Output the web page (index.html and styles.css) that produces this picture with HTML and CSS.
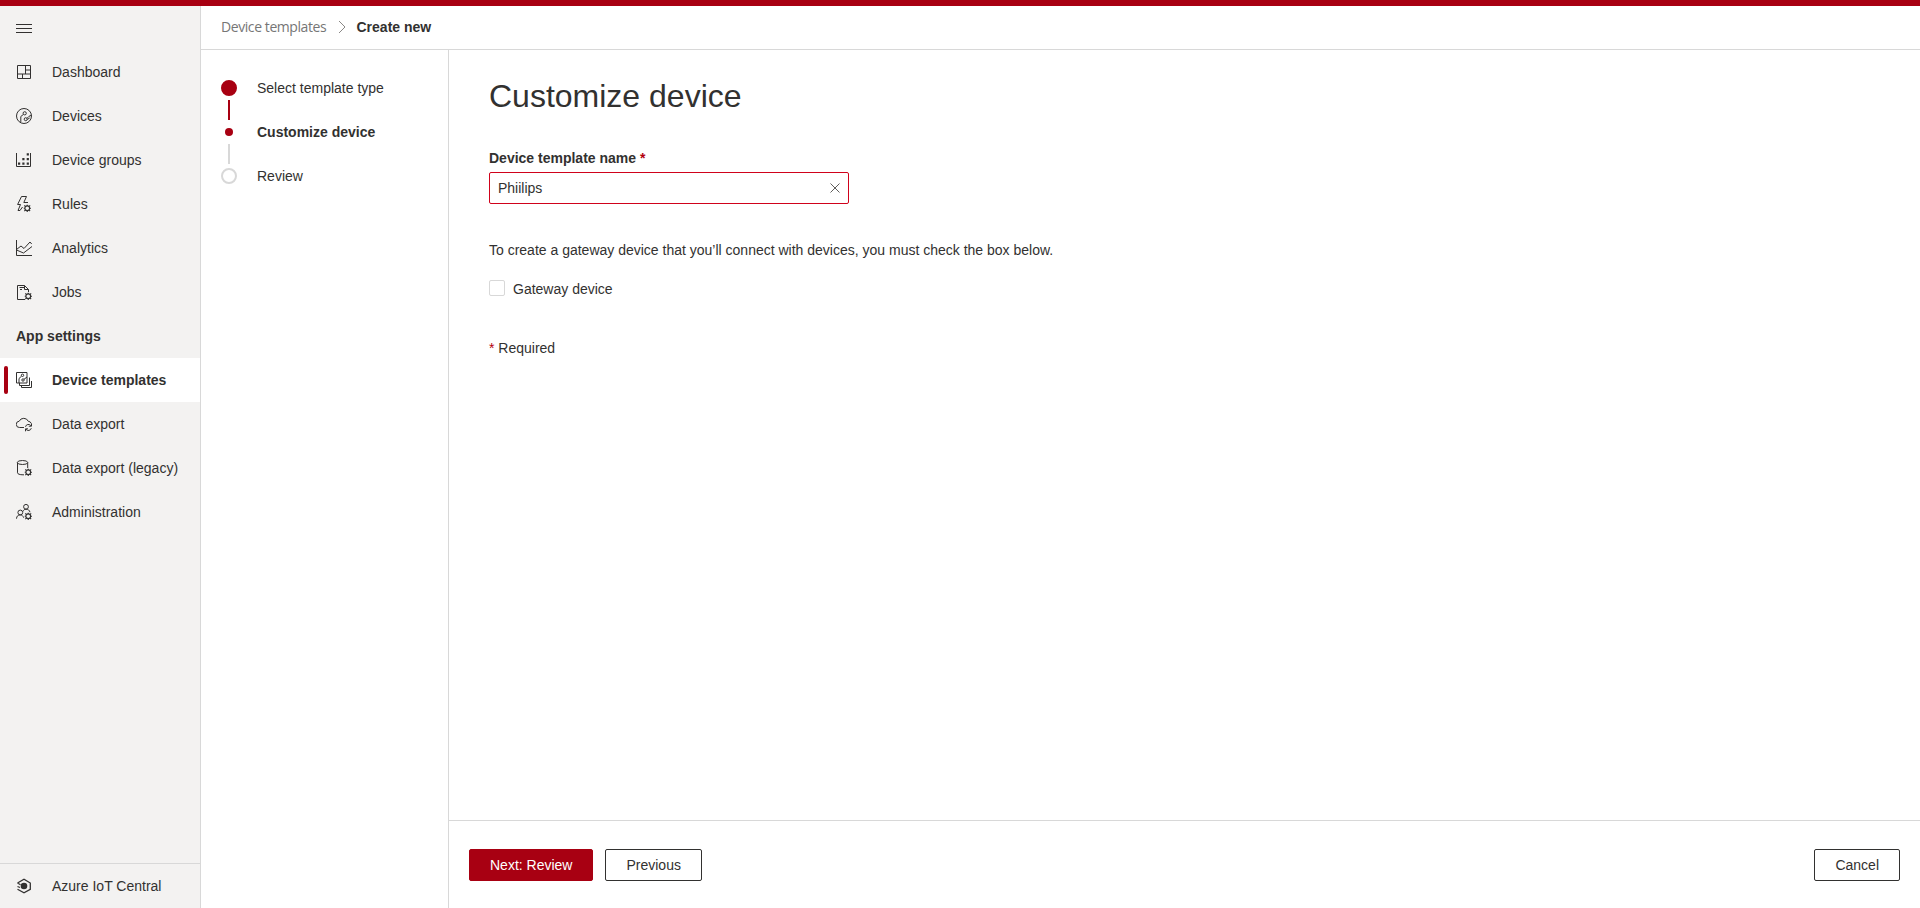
FILE: index.html
```html
<!DOCTYPE html>
<html lang="en">
<head>
<meta charset="utf-8">
<title>Customize device - Azure IoT Central</title>
<link rel="stylesheet" href="styles.css">
</head>
<body>
<svg class="defs" width="0" height="0" aria-hidden="true">
  <symbol id="gear" viewBox="0 0 7 7">
    <circle cx="3.5" cy="3.5" r="2.200" fill="none" stroke="currentColor" stroke-width="1"/>
    <path fill="none" stroke="currentColor" stroke-width="1" d="M3.500 0v1.300M3.500 5.700V7M0 3.500h1.300M5.700 3.500H7M.8.800l1.100 1.100M5.100 5.100l1.100 1.100M.8 6.200l1.100-1.100M5.100 1.900 6.200.8"/>
  </symbol>
</svg>
<div class="topbar"></div>
<div class="shell">
  <nav class="sidebar">
    <button class="nav-item menu" aria-label="Menu">
      <svg class="icon" viewBox="0 0 16 16"><path d="M0 4.500h16M0 8.500h16M0 12.500h16"/></svg>
    </button>
    <a class="nav-item"><svg class="icon" viewBox="0 0 16 16"><path d="M1.500 1.500h13v13h-13zM9.500 1.500v8.500M1.500 10h13M9.500 6h5M6.500 10v4.500"/></svg>Dashboard</a>
    <a class="nav-item"><svg class="icon" viewBox="0 0 16 16"><circle cx="8" cy="8" r="7.500"/><circle cx="8.700" cy="5.300" r="1.600"/><circle cx="9.700" cy="11.200" r="1.500"/><path d="M7.300 6.500 4.800 8.500V14M11 10.300l2-2 2.300-1M11.200 11.500l2.500-1.500"/></svg>Devices</a>
    <a class="nav-item"><svg class="icon" viewBox="0 0 16 16"><path d="M.5 1v13.500h14V1"/><path class="solid" d="M2 10.500h2.200v2.200H2zM6.300 10.500h2.200v2.200H6.300zM10.700 10.500h2.200v2.200h-2.200zM6.300 6h2.200v2.200H6.300zM10.700 6h2.200v2.200h-2.200zM10.700 1.200h2.200v2.200h-2.200z"/></svg>Device groups</a>
    <a class="nav-item"><svg class="icon" viewBox="0 0 16 16"><path d="M10.500.5h-5L1.600 8.500h2.900L2 14.500h2l2.500-3.500M10.500.5 7.800 6.500H12"/><use href="#gear" x="7.500" y="8.500" width="7.500" height="7.500"/></svg>Rules</a>
    <a class="nav-item"><svg class="icon" viewBox="0 0 16 16"><path d="M.5 0v15.500H16M.5 9.500 5 6l3 2.500L14 2l1.700 2M.5 10l7 3L16 6.500"/></svg>Analytics</a>
    <a class="nav-item"><svg class="icon" viewBox="0 0 16 16"><path d="M9 15.500H1.500v-14h7l4 4V8M8.500 1.500v4h4M3.500 3.500h5M4 5.500h2"/><use href="#gear" x="8.500" y="8.500" width="7.500" height="7.500"/></svg>Jobs</a>
    <div class="nav-heading">App settings</div>
    <a class="nav-item selected"><svg class="icon" viewBox="0 0 16 16"><path d="M.5.5h10.500v10.500H.5z"/><circle cx="6.500" cy="3.300" r="1.200"/><circle cx="7" cy="8" r="1.200"/><path d="M5.500 4.200 3 6.500V11M8 7.300l3-2.300M3.500 11v2.500h10v-8M5.500 14v1.500h10V9"/></svg>Device templates</a>
    <a class="nav-item"><svg class="icon" viewBox="0 0 16 16"><path d="M8 11.500H3.700A3.100 3.100 0 0 1 3.200 5.200 5 5 0 0 1 12.300 5.300 3.400 3.400 0 0 1 15.300 7.500M9.500 10.800A3 3 0 0 1 14.900 9.700M15.500 7.500v2.700H12.800M15.300 12.200A3 3 0 0 1 10 13.300M9.500 15.300v-2.500H12"/></svg>Data export</a>
    <a class="nav-item"><svg class="icon" viewBox="0 0 16 16"><ellipse cx="6.500" cy="2.500" rx="5.200" ry="2"/><path d="M1.500 2.500v10.300c0 1.200 2.300 2 5.500 2h1M11.700 2.500V8"/><use href="#gear" x="8.500" y="8.500" width="7.500" height="7.500"/></svg>Data export (legacy)</a>
    <a class="nav-item"><svg class="icon" viewBox="0 0 16 16"><circle cx="10" cy="2.800" r="2.400"/><circle cx="4.300" cy="8.500" r="2.400"/><path d="M.5 14.700c.2-2.700 1.600-3.800 3.800-3.800 1.500 0 2.600.8 3.400 2.800M7 7.500c.5-1.500 1.500-2.300 3-2.300 2 0 3.500 1 4 3"/><use href="#gear" x="8.500" y="8.500" width="7.500" height="7.500"/></svg>Administration</a>
    <a class="nav-item product"><svg class="icon brand" viewBox="0 0 16 16"><path d="M1.500 5 8 1.300 14.300 5v6.300L8 14.800 1.500 11.300M1.500 5l3 1.700M1.500 8.500 4 9.500"/><circle class="solid" cx="8" cy="8" r="3.300"/></svg>Azure IoT Central</a>
  </nav>
  <div class="page">
    <header class="breadcrumb">
      <a class="crumb">Device templates</a>
      <svg class="chevron" viewBox="0 0 8 14"><path d="m1 1 6 6-6 6"/></svg>
      <span class="current">Create new</span>
    </header>
    <div class="workspace">
      <ol class="steps">
        <li class="step done"><span class="marker"></span>Select template type</li>
        <li class="step active"><span class="marker"></span>Customize device</li>
        <li class="step"><span class="marker"></span>Review</li>
      </ol>
      <main class="main">
        <section class="form">
          <h1>Customize device</h1>
          <label class="label" for="name">Device template name <span class="star">*</span></label>
          <div class="field">
            <input id="name" type="text" value="Phiilips">
            <svg class="clear" viewBox="0 0 10 10"><path d="m.5.5 9 9M9.500.5l-9 9"/></svg>
          </div>
          <p class="hint">To create a gateway device that you’ll connect with devices, you must check the box below.</p>
          <div class="check"><span class="box"></span><span>Gateway device</span></div>
          <p class="required"><span class="star">*</span> Required</p>
        </section>
        <footer class="actions">
          <button class="btn primary">Next: Review</button>
          <button class="btn">Previous</button>
          <button class="btn cancel">Cancel</button>
        </footer>
      </main>
    </div>
  </div>
</div>
</body>
</html>
```
FILE: styles.css
```css
* { box-sizing: border-box; }
body {
  margin: 0;
  height: 100vh;
  display: flex;
  flex-direction: column;
  overflow: hidden;
  background: #fff;
  color: #323130;
  font: 14px/20px "Liberation Sans", Arial, sans-serif;
}
button, input { font: inherit; color: inherit; }
h1, p, ol { margin: 0; padding: 0; }
.defs { position: absolute; }
.topbar { height: 6px; flex: none; background: #a80012; }
.shell { flex: 1; display: flex; min-height: 0; }

.sidebar {
  width: 201px;
  flex: none;
  display: flex;
  flex-direction: column;
  background: #f3f2f1;
  border-right: 1px solid #d8d8d8;
}
.nav-item, .nav-heading {
  height: 44px;
  flex: none;
  display: flex;
  align-items: center;
  padding: 0 16px;
  white-space: nowrap;
}
.nav-item { gap: 20px; position: relative; }
.nav-heading { font-weight: 700; }
.menu { border: 0; background: none; }
.icon {
  width: 16px;
  height: 16px;
  flex: none;
  fill: none;
  stroke: currentColor;
  stroke-width: 1;
}
.icon .solid { fill: currentColor; stroke: none; }
.brand { stroke-width: 1.3; }
.selected { background: #fff; font-weight: 700; }
.selected::before {
  content: "";
  position: absolute;
  left: 4px;
  top: 8px;
  width: 4px;
  height: 28px;
  border-radius: 2px;
  background: #a80012;
}
.product {
  margin-top: auto;
  height: 45px;
  border-top: 1px solid #d8d8d8;
}

.page { flex: 1; display: flex; flex-direction: column; min-width: 0; }
.breadcrumb {
  height: 44px;
  flex: none;
  display: flex;
  align-items: center;
  padding: 0 20px 1px;
  border-bottom: 1px solid #d8d8d8;
}
.crumb {
  width: 105px;
  white-space: nowrap;
  font-family: "Open Sans", sans-serif;
  letter-spacing: -0.42px;
  color: #767676;
}
.chevron {
  width: 8px;
  height: 14px;
  margin: 0 11px 0 12px;
  fill: none;
  stroke: #8a8886;
}
.current { font-weight: 700; margin-left: -0.5px; }

.workspace { flex: 1; display: flex; min-height: 0; }
.steps {
  width: 248px;
  flex: none;
  padding: 16px 20px;
  list-style: none;
  border-right: 1px solid #d8d8d8;
}
.step { height: 44px; display: flex; align-items: center; gap: 20px; position: relative; }
.marker {
  width: 16px;
  height: 16px;
  border: 2px solid #d8d8d8;
  border-radius: 50%;
}
.done .marker { background: #a80012; border-color: #a80012; }
.active .marker { width: 8px; height: 8px; margin: 0 4px; background: #a80012; border: 0; }
.active { font-weight: 700; }
.step:not(:last-child)::after {
  content: "";
  position: absolute;
  left: 7px;
  top: 34px;
  width: 2px;
  height: 20px;
  background: #d8d8d8;
}
.step.done::after { background: #a80012; }

.main { flex: 1; display: flex; flex-direction: column; min-width: 0; }
.form { flex: 1; padding: 26px 40px; }
h1 { font-size: 32px; line-height: 40px; font-weight: 400; }
.label { display: block; margin-top: 32px; font-weight: 700; }
.star { color: #b3000c; }
.field {
  width: 360px;
  height: 32px;
  margin-top: 4px;
  display: flex;
  align-items: center;
  padding: 0 8px;
  border: 1px solid #d0021b;
  border-radius: 2px;
}
.field input { flex: 1; min-width: 0; padding: 0; border: 0; outline: 0; background: none; }
.clear { width: 10px; height: 10px; fill: none; stroke: #605e5c; }
.hint { margin-top: 36px; }
.check { margin-top: 20px; display: flex; gap: 8px; line-height: 18px; }
.box { width: 16px; height: 16px; border: 1px solid #d8d8d8; border-radius: 2px; }
.required { margin-top: 40px; }
.actions {
  height: 88px;
  flex: none;
  display: flex;
  align-items: center;
  gap: 12px;
  padding: 0 20px;
  border-top: 1px solid #d8d8d8;
}
.btn {
  height: 32px;
  padding: 0 20px;
  border: 1px solid #323130;
  border-radius: 2px;
  background: #fff;
}
.primary { background: #a80012; border-color: #a80012; color: #fff; }
.cancel { margin-left: auto; }
```
